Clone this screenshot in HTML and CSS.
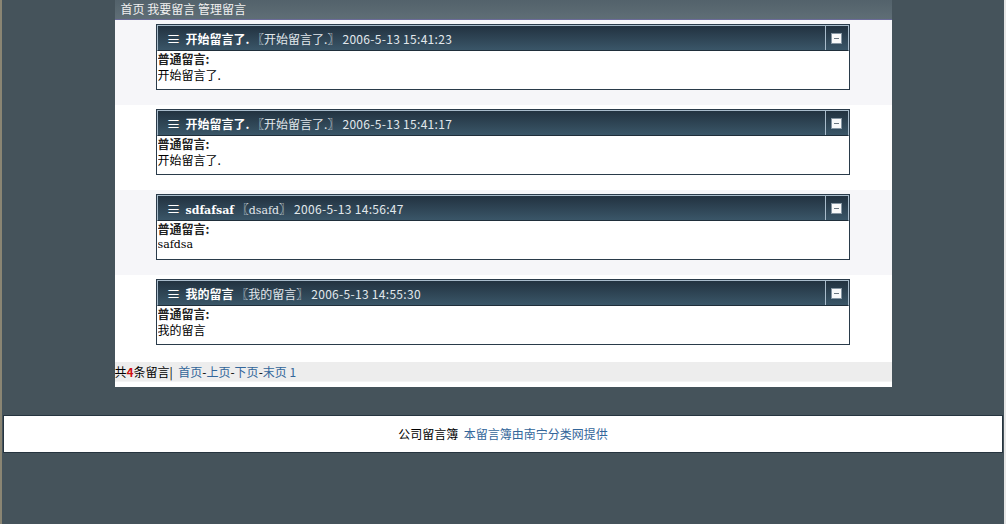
FILE: index.html
```html
<!DOCTYPE html>
<html lang="zh-CN">
<head>
    <meta charset="UTF-8">
    <title>公司留言簿</title>
    <link rel="stylesheet" href="styles.css">
</head>
<body>
    <div class="page">
        <div class="main">
            <div class="nav">
                <a href="#">首页</a> <a href="#">我要留言</a> <a href="#">管理留言</a>
            </div>

            <div class="row alt">
                <div class="card">
                    <div class="card-head">
                        <div class="card-title"><span class="bars">&#8801;</span><b>开始留言了.</b> 〖开始留言了.〗<span class="date">2006-5-13 15:41:23</span></div>
                        <div class="card-tool"><span class="minus"></span></div>
                    </div>
                    <div class="card-body">
                        <div class="label">普通留言:</div>
                        <div>开始留言了.</div>
                    </div>
                </div>
            </div>

            <div class="row">
                <div class="card">
                    <div class="card-head">
                        <div class="card-title"><span class="bars">&#8801;</span><b>开始留言了.</b> 〖开始留言了.〗<span class="date">2006-5-13 15:41:17</span></div>
                        <div class="card-tool"><span class="minus"></span></div>
                    </div>
                    <div class="card-body">
                        <div class="label">普通留言:</div>
                        <div>开始留言了.</div>
                    </div>
                </div>
            </div>

            <div class="row alt">
                <div class="card">
                    <div class="card-head">
                        <div class="card-title"><span class="bars">&#8801;</span><b class="latin">sdfafsaf</b> 〖<span class="latin">dsafd</span>〗<span class="date">2006-5-13 14:56:47</span></div>
                        <div class="card-tool"><span class="minus"></span></div>
                    </div>
                    <div class="card-body">
                        <div class="label">普通留言:</div>
                        <div class="latin">safdsa</div>
                    </div>
                </div>
            </div>

            <div class="row">
                <div class="card">
                    <div class="card-head">
                        <div class="card-title"><span class="bars">&#8801;</span><b>我的留言</b> 〖我的留言〗<span class="date">2006-5-13 14:55:30</span></div>
                        <div class="card-tool"><span class="minus"></span></div>
                    </div>
                    <div class="card-body">
                        <div class="label">普通留言:</div>
                        <div>我的留言</div>
                    </div>
                </div>
            </div>

            <div class="pager">
                共<span class="count">4</span>条留言|&nbsp;
                <a href="#">首页</a>-<a href="#">上页</a>-<a href="#">下页</a>-<a href="#">末页</a>&nbsp;<a href="#">1</a>
            </div>
        </div>

        <div class="footer">
            公司留言簿&nbsp; <a href="#">本留言簿由南宁分类网提供</a>
        </div>
    </div>
</body>
</html>
```

FILE: styles.css
```css
html, body {
    margin: 0;
    height: 100%;
}

body {
    background-color: #45535b;
    font-family: "Noto Sans CJK SC", "Liberation Sans", sans-serif;
    font-size: 12px;
    color: #000;
}

a {
    color: #33669a;
    text-decoration: none;
}

.page {
    min-height: 100%;
    border-left: 2px solid #8a8573;
    border-right: 2px solid #e6e6e6;
    box-sizing: border-box;
}

.main {
    width: 777px;
    margin: 0 auto;
    background-color: #fff;
    padding-bottom: 5px;
}

.nav {
    height: 20px;
    line-height: 17px;
    padding-left: 6px;
    background: linear-gradient(#53626b, #5f6e76);
    border-bottom: 1px solid #6b6b99;
    box-sizing: border-box;
    overflow: hidden;
}

.nav a {
    color: #f0f0f0;
}

.row {
    padding: 4px 0 15px;
    background-color: #fff;
}

.row.alt {
    background-color: #f6f6f9;
}

.card {
    width: 692px;
    margin-left: 41px;
    border: 1px solid #2a3b4a;
    background-color: #fff;
}

.card-head {
    display: flex;
    height: 26px;
    box-sizing: border-box;
    border: 1px solid #a9bccb;
    border-bottom: 1px solid #1f2e3a;
    background: linear-gradient(#223240, #3a5668);
    color: #e2e8ec;
}

.card-title {
    flex: 1;
    height: 24px;
    line-height: 24px;
    padding-left: 9px;
    white-space: nowrap;
    overflow: hidden;
}

.card-title b {
    color: #fff;
    font-weight: bold;
}

.date {
    letter-spacing: 0.3px;
    margin-left: 3px;
}

.bars {
    display: inline-block;
    width: 19px;
    font-size: 14px;
    color: #fff;
}

.card-tool {
    width: 22px;
    border-left: 1px solid #a9bccb;
    display: flex;
    align-items: center;
    justify-content: center;
}

.minus {
    position: relative;
    display: block;
    width: 9px;
    height: 9px;
    background-color: #fafafa;
    border: 1px solid #8696a3;
}

.minus::after {
    content: "";
    position: absolute;
    left: 2px;
    right: 2px;
    top: 4px;
    height: 1px;
    background-color: #6b7780;
}

.card-body {
    padding: 0 1px 6px;
}

.card-body div {
    height: 16px;
    line-height: 16px;
    overflow: hidden;
}

.card-body .label {
    font-weight: bold;
    color: #222;
}

.latin {
    font-family: "DejaVu Serif", serif;
    font-size: 11px;
}

.pager {
    height: 19px;
    line-height: 19px;
    margin-top: 2px;
    background-color: #ededed;
    border-bottom: 1px solid #f4f4f4;
    overflow: hidden;
}

.count {
    color: #d01010;
    font-weight: bold;
}

.footer {
    margin: 28px 1px 0;
    height: 36px;
    line-height: 36px;
    text-align: center;
    background-color: #fff;
    border: 1px solid #26343f;
}
```
